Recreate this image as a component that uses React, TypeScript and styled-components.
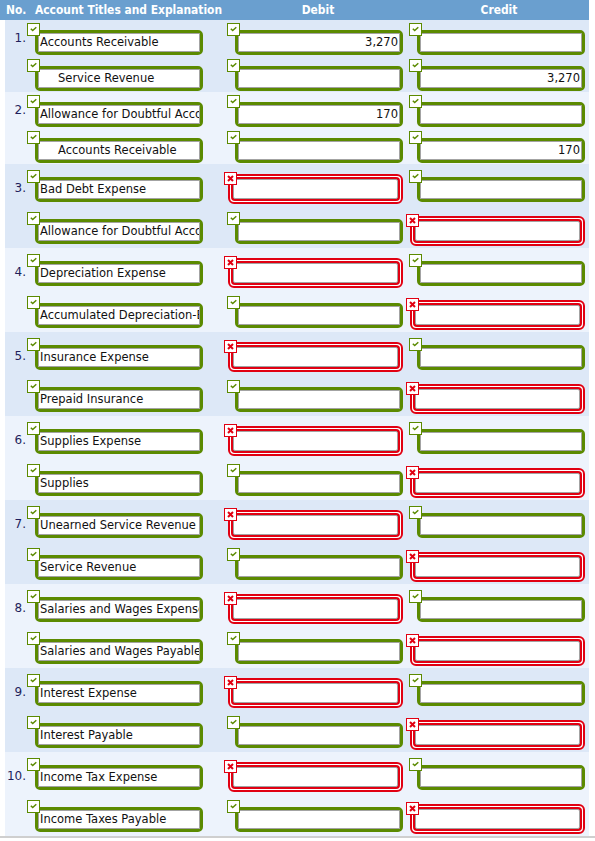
import styled, { createGlobalStyle } from 'styled-components';

type Line = {
  account: string;
  indent?: boolean;
  debit?: string;
  credit?: string;
  debitBad?: boolean;
  creditBad?: boolean;
};

type Entry = { no: string; lines: [Line, Line] };

const entries: Entry[] = [
  {
    no: '1.',
    lines: [
      { account: 'Accounts Receivable', debit: '3,270' },
      { account: 'Service Revenue', indent: true, credit: '3,270' },
    ],
  },
  {
    no: '2.',
    lines: [
      { account: 'Allowance for Doubtful Accounts', debit: '170' },
      { account: 'Accounts Receivable', indent: true, credit: '170' },
    ],
  },
  {
    no: '3.',
    lines: [
      { account: 'Bad Debt Expense', debitBad: true },
      { account: 'Allowance for Doubtful Accounts', creditBad: true },
    ],
  },
  {
    no: '4.',
    lines: [
      { account: 'Depreciation Expense', debitBad: true },
      { account: 'Accumulated Depreciation-Equipment', creditBad: true },
    ],
  },
  {
    no: '5.',
    lines: [
      { account: 'Insurance Expense', debitBad: true },
      { account: 'Prepaid Insurance', creditBad: true },
    ],
  },
  {
    no: '6.',
    lines: [
      { account: 'Supplies Expense', debitBad: true },
      { account: 'Supplies', creditBad: true },
    ],
  },
  {
    no: '7.',
    lines: [
      { account: 'Unearned Service Revenue', debitBad: true },
      { account: 'Service Revenue', creditBad: true },
    ],
  },
  {
    no: '8.',
    lines: [
      { account: 'Salaries and Wages Expense', debitBad: true },
      { account: 'Salaries and Wages Payable', creditBad: true },
    ],
  },
  {
    no: '9.',
    lines: [
      { account: 'Interest Expense', debitBad: true },
      { account: 'Interest Payable', creditBad: true },
    ],
  },
  {
    no: '10.',
    lines: [
      { account: 'Income Tax Expense', debitBad: true },
      { account: 'Income Taxes Payable', creditBad: true },
    ],
  },
];

const GREEN = '#5b8a00';
const RED = '#e10012';

const GlobalStyle = createGlobalStyle`
  body {
    margin: 0;
    background: #fff;
    font-family: "DejaVu Sans", Verdana, sans-serif;
  }
`;

const Page = styled.div`
  width: 595px;
`;

const Table = styled.div`
  width: 589px;
`;

const HeaderRow = styled.div`
  display: grid;
  grid-template-columns: 27px 200px 182px 180px;
  height: 20px;
  align-items: center;
  background: #6a9fcf;
  color: #fff;
  font-family: "DejaVu Sans Condensed", "DejaVu Sans", sans-serif;
  font-weight: bold;
  font-size: 11.9px;
  white-space: nowrap;
`;

const HeadCell = styled.div<{ $center?: boolean; $pad?: number }>`
  text-align: ${({ $center }) => ($center ? 'center' : 'left')};
  padding-left: ${({ $pad }) => $pad ?? 0}px;
  overflow: visible;
`;

const EntryBlock = styled.div<{ $tall: boolean; $shade: boolean }>`
  margin-left: 5px;
  display: grid;
  grid-template-columns: 22px 200px 182px 180px;
  grid-template-rows: repeat(2, ${({ $tall }) => ($tall ? 34 : 28)}px);
  row-gap: 8px;
  padding-top: 8px;
  background: ${({ $shade }) => ($shade ? '#dde8f7' : '#edf3fc')};
`;

const Number = styled.div<{ $tall: boolean }>`
  align-self: start;
  text-align: right;
  padding-top: ${({ $tall }) => ($tall ? 9 : 3)}px;
  padding-right: 1px;
  font-size: 12px;
  line-height: 14px;
  color: #1f1f5c;
  white-space: nowrap;
`;

const Spacer = styled.div``;

const FieldBox = styled.div<{ $bad: boolean }>`
  position: relative;
  align-self: center;
  margin-left: ${({ $bad }) => ($bad ? 1 : 8)}px;
  width: ${({ $bad }) => ($bad ? 175 : 168)}px;
`;

const Badge = styled.div<{ $bad: boolean }>`
  position: absolute;
  left: ${({ $bad }) => ($bad ? -4 : -8)}px;
  top: ${({ $bad }) => ($bad ? -2 : -7)}px;
  z-index: 1;
  width: 13px;
  height: 13px;
  box-sizing: border-box;
  border: 1px solid ${({ $bad }) => ($bad ? RED : GREEN)};
  background: #fff;
  display: flex;
  svg {
    display: block;
  }
`;

const Frame = styled.div<{ $bad: boolean }>`
  box-sizing: border-box;
  width: 100%;
  border: ${({ $bad }) => ($bad ? `2px solid ${RED}` : `3px solid ${GREEN}`)};
  border-radius: ${({ $bad }) => ($bad ? 6 : 5)}px;
  padding: ${({ $bad }) => ($bad ? 3 : 0)}px;
  background: #fff;
`;

const Input = styled.div<{ $bad: boolean; $right?: boolean; $indent?: boolean }>`
  height: ${({ $bad }) => ($bad ? 18 : 17)}px;
  line-height: ${({ $bad }) => ($bad ? 18 : 17)}px;
  border: 1px solid #a3a3a3;
  border-radius: ${({ $bad }) => ($bad ? 2 : 1)}px;
  box-shadow: ${({ $bad }) => ($bad ? `0 0 0 2px ${RED}` : 'none')};
  padding: 0 1px 0 ${({ $indent }) => ($indent ? 19 : 1)}px;
  text-align: ${({ $right }) => ($right ? 'right' : 'left')};
  font-size: 11.5px;
  color: #111;
  white-space: nowrap;
  overflow: hidden;
  background: #fff;
`;

const CheckIcon = () => (
  <svg width="11" height="11" viewBox="0 0 11 11">
    <path d="M2.8 4.8 L4.7 6.5 L8.3 3.2" fill="none" stroke={GREEN} strokeWidth="1.5" />
  </svg>
);

const CrossIcon = () => (
  <svg width="11" height="11" viewBox="0 0 11 11">
    <path d="M3 3 L8 8 M8 3 L3 8" fill="none" stroke={RED} strokeWidth="2" />
  </svg>
);

interface FieldProps {
  value?: string;
  bad?: boolean;
  right?: boolean;
  indent?: boolean;
}

const Field = ({ value = '', bad = false, right, indent }: FieldProps) => (
  <FieldBox $bad={bad}>
    <Badge $bad={bad}>{bad ? <CrossIcon /> : <CheckIcon />}</Badge>
    <Frame $bad={bad}>
      <Input $bad={bad} $right={right} $indent={indent}>
        {value}
      </Input>
    </Frame>
  </FieldBox>
);

const Footer = styled.div`
  width: 595px;
  height: 2px;
  background: #cfcfcf;
`;

const App = () => {
  return (
    <Page>
      <GlobalStyle />
      <Table>
        <HeaderRow>
          <HeadCell $pad={6}>No.</HeadCell>
          <HeadCell $pad={8}>Account Titles and Explanation</HeadCell>
          <HeadCell $center>Debit</HeadCell>
          <HeadCell $center>Credit</HeadCell>
        </HeaderRow>
        {entries.map((entry, i) => {
          const tall = entry.lines.some((l) => l.debitBad || l.creditBad);
          return (
            <EntryBlock key={entry.no} $tall={tall} $shade={i % 2 === 0}>
              {entry.lines.map((line, j) => (
                <>
                  {j === 0 ? <Number $tall={tall}>{entry.no}</Number> : <Spacer />}
                  <Field value={line.account} indent={line.indent} />
                  <Field value={line.debit} bad={line.debitBad} right />
                  <Field value={line.credit} bad={line.creditBad} right />
                </>
              ))}
            </EntryBlock>
          );
        })}
      </Table>
      <Footer />
    </Page>
  );
};

export default App;
